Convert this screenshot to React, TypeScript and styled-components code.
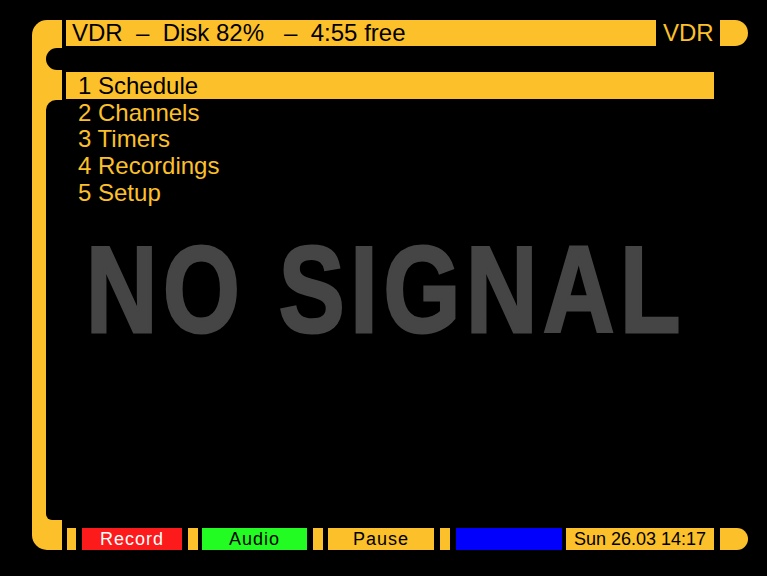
import React from 'react';
import styled, { createGlobalStyle } from 'styled-components';

const YELLOW = '#fcc02a';

const GlobalStyle = createGlobalStyle`
  html, body {
    margin: 0;
    padding: 0;
    background: #000;
  }
  body {
    font-family: 'Liberation Sans', Arial, sans-serif;
  }
`;

const Screen = styled.div`
  width: 767px;
  height: 576px;
  box-sizing: border-box;
  padding: 20px 19px 0 32px;
  background: #000;
  display: grid;
  grid-template-columns: 30px minmax(0, 1fr);
  grid-template-rows: 26px 26px 28px 420px 30px;
  column-gap: 4px;
  overflow: hidden;
`;

// left frame pieces, stacked in column 1
const Frame = styled.div<{ $row: number; $radius?: string; $inset?: string }>`
  grid-column: 1;
  grid-row: ${(p) => p.$row};
  background: ${YELLOW};
  border-radius: ${(p) => p.$radius || '0'};
  padding: ${(p) => p.$inset || '0'};
  display: flex;
  justify-content: flex-end;
`;

const FrameCut = styled.div<{ $radius: string }>`
  flex: 1;
  background: #000;
  border-radius: ${(p) => p.$radius};
`;

const Header = styled.div`
  grid-column: 2;
  grid-row: 1;
  display: flex;
  gap: 7px;
  font-size: 24px;
  line-height: 26px;
`;

const TitleBar = styled.div`
  flex: 1;
  background: ${YELLOW};
  color: #000;
  padding-left: 6px;
  white-space: pre;
  overflow: hidden;
`;

const HeaderLabel = styled.div`
  width: 50px;
  color: ${YELLOW};
`;

const EndCap = styled.div`
  width: 28px;
  background: ${YELLOW};
  border-radius: 0 13px 13px 0;
`;

const Content = styled.div`
  grid-column: 2;
  grid-row: 3 / span 2;
  display: flex;
  flex-direction: column;
  min-width: 0;
`;

const Menu = styled.div`
  display: flex;
  flex-direction: column;
  margin-right: 34px;
`;

const MenuItem = styled.div<{ $selected?: boolean }>`
  height: 26.7px;
  box-sizing: border-box;
  padding: 1px 0 0 12px;
  font-size: 24px;
  line-height: 26px;
  background: ${(p) => (p.$selected ? YELLOW : 'transparent')};
  color: ${(p) => (p.$selected ? '#000' : YELLOW)};
`;

const NoSignal = styled.div`
  margin: 24px 0 0 20px;
  font-size: 122px;
  line-height: 122px;
  font-weight: bold;
  letter-spacing: 7px;
  color: #454545;
  -webkit-text-stroke: 3px #454545;
  white-space: nowrap;
  transform: scaleX(0.81);
  transform-origin: left center;
`;

const ButtonRow = styled.div`
  grid-column: 2;
  grid-row: 5;
  align-self: end;
  height: 22px;
  display: flex;
`;

const Marker = styled.div<{ $w: number; $ml: number }>`
  width: ${(p) => p.$w}px;
  margin-left: ${(p) => p.$ml}px;
  background: ${YELLOW};
`;

const Key = styled.div<{ $bg: string; $fg: string; $w: number; $ml: number }>`
  width: ${(p) => p.$w}px;
  margin-left: ${(p) => p.$ml}px;
  background: ${(p) => p.$bg};
  color: ${(p) => p.$fg};
  font-size: 18px;
  letter-spacing: 1px;
  line-height: 22px;
  text-align: center;
`;

const DateBox = styled.div`
  width: 148px;
  margin-left: 4px;
  background: ${YELLOW};
  color: #000;
  font-size: 18px;
  line-height: 22px;
  text-align: center;
`;

const BottomCap = styled(EndCap)`
  margin-left: 6px;
  border-radius: 0 11px 11px 0;
`;

const menu = ['1 Schedule', '2 Channels', '3 Timers', '4 Recordings', '5 Setup'];

const App: React.FC = () => {
  return (
    <>
      <GlobalStyle />
      <Screen>
        <Frame $row={1} $radius="15px 0 0 0" />
        <Frame $row={2} $inset="2px 0 2px 14px">
          <FrameCut $radius="11px 0 0 11px" />
        </Frame>
        <Frame $row={3} />
        <Frame $row={4} $inset="0 0 0 14px">
          <FrameCut $radius="10px 0 0 6px" />
        </Frame>
        <Frame $row={5} $radius="0 0 0 15px" />

        <Header>
          <TitleBar>{'VDR  –  Disk 82%   –  4:55 free'}</TitleBar>
          <HeaderLabel>VDR</HeaderLabel>
          <EndCap />
        </Header>

        <Content>
          <Menu>
            {menu.map((item, i) => (
              <MenuItem key={item} $selected={i === 0}>
                {item}
              </MenuItem>
            ))}
          </Menu>
          <NoSignal>NO SIGNAL</NoSignal>
        </Content>

        <ButtonRow>
          <Marker $w={9} $ml={1} />
          <Key $bg="#fc1a1a" $fg="#fff" $w={100} $ml={6}>Record</Key>
          <Marker $w={10} $ml={6} />
          <Key $bg="#22fc22" $fg="#000" $w={105} $ml={4}>Audio</Key>
          <Marker $w={10} $ml={6} />
          <Key $bg={YELLOW} $fg="#000" $w={106} $ml={5}>Pause</Key>
          <Marker $w={10} $ml={6} />
          <Key $bg="#0000fc" $fg="#fff" $w={106} $ml={6} />
          <DateBox>Sun 26.03 14:17</DateBox>
          <BottomCap />
        </ButtonRow>
      </Screen>
    </>
  );
};

export default App;
